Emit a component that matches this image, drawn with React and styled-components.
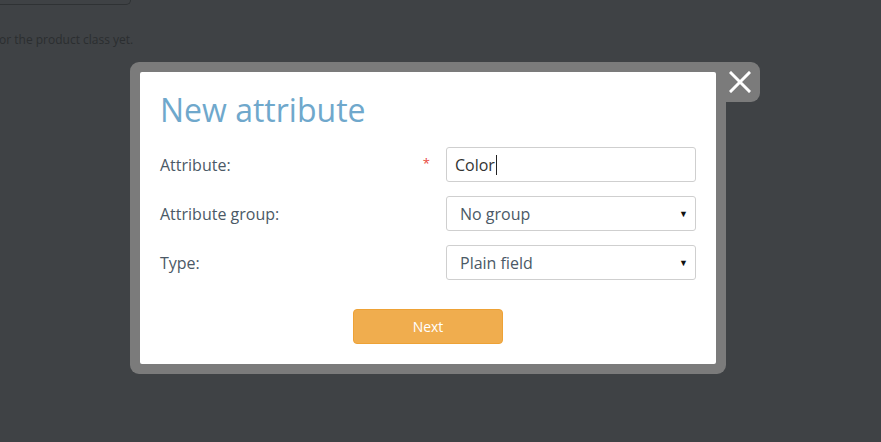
import React from 'react';
import styled, { createGlobalStyle } from 'styled-components';

const GlobalStyle = createGlobalStyle`
    html, body {
        margin: 0;
        padding: 0;
        background: #3f4245;
        font-family: "Open Sans", "Liberation Sans", sans-serif;
    }
`;

function CloseIcon() {
    return (
        <svg width="22" height="22" viewBox="0 0 22 22">
            <path d="M2 2 L20 20 M20 2 L2 20" stroke="#fff" strokeWidth="3" strokeLinecap="square" />
        </svg>
    );
}

function Field({ label, required, children }) {
    return (
        <Row>
            <Label>
                {label}
                {required && <Star>*</Star>}
            </Label>
            {children}
        </Row>
    );
}

function App() {
    return (
        <Page>
            <GlobalStyle />
            <Backdrop>
                <TopBox />
                <Note>or the product class yet.</Note>
            </Backdrop>
            <Frame>
                <CloseTab aria-label="Close">
                    <CloseIcon />
                </CloseTab>
                <Dialog>
                    <Title>New attribute</Title>
                    <Form>
                        <Field label="Attribute:" required>
                            <TextBox>
                                Color<Caret />
                            </TextBox>
                        </Field>
                        <Field label="Attribute group:">
                            <Select>
                                <span>No group</span>
                                <Arrow>▼</Arrow>
                            </Select>
                        </Field>
                        <Field label="Type:">
                            <Select>
                                <span>Plain field</span>
                                <Arrow>▼</Arrow>
                            </Select>
                        </Field>
                    </Form>
                    <Actions>
                        <Button>Next</Button>
                    </Actions>
                </Dialog>
            </Frame>
        </Page>
    );
}

const Page = styled.div`
    position: relative;
    width: 881px;
    height: 442px;
    overflow: hidden;
`;

const Backdrop = styled.div`
    display: flex;
    flex-direction: column;
`;

const TopBox = styled.div`
    width: 130px;
    height: 4px;
    border-right: 1px solid #2f3234;
    border-bottom: 1px solid #2f3234;
    border-bottom-right-radius: 5px;
`;

const Note = styled.p`
    margin: 26px 0 0 -1px;
    font-size: 12px;
    color: #2b2e30;
`;

const Frame = styled.div`
    position: absolute;
    left: 130px;
    top: 62px;
    width: 576px;
    padding: 10px;
    background: #7b7b7b;
    border-radius: 9px 0 9px 9px;
`;

const CloseTab = styled.button`
    position: absolute;
    top: 0;
    right: -34px;
    width: 34px;
    height: 40px;
    padding: 0 6px 0 0;
    border: none;
    background: #7b7b7b;
    border-radius: 0 9px 9px 0;
    display: flex;
    align-items: center;
    justify-content: center;
    cursor: pointer;
`;

const Dialog = styled.div`
    background: #fff;
    border-radius: 2px;
    padding: 18px 20px 20px 20px;
`;

const Title = styled.h1`
    margin: 0 0 17px 0;
    font-size: 32px;
    font-weight: 400;
    color: #6fa8cc;
    line-height: 40px;
`;

const Form = styled.div`
    display: flex;
    flex-direction: column;
    gap: 14px;
`;

const Row = styled.div`
    display: grid;
    grid-template-columns: 1fr 250px;
    align-items: center;
`;

const Label = styled.label`
    display: flex;
    justify-content: space-between;
    padding-right: 16px;
    font-size: 16px;
    color: #4b5966;
`;

const Star = styled.span`
    color: #e8463c;
    font-size: 13px;
`;

const TextBox = styled.div`
    box-sizing: border-box;
    height: 35px;
    display: flex;
    align-items: center;
    padding: 0 8px;
    border: 1px solid #cfcfcf;
    border-radius: 3px;
    font-size: 16px;
    color: #333;
`;

const Caret = styled.span`
    display: inline-block;
    width: 1px;
    height: 20px;
    margin-left: 1px;
    background: #222;
`;

const Select = styled.div`
    box-sizing: border-box;
    height: 35px;
    display: flex;
    align-items: center;
    justify-content: space-between;
    padding: 0 7px 0 13px;
    border: 1px solid #cfcfcf;
    border-radius: 3px;
    font-size: 16px;
    color: #4b5966;
`;

const Arrow = styled.span`
    font-size: 9px;
    color: #111;
`;

const Actions = styled.div`
    display: flex;
    justify-content: center;
    margin-top: 29px;
`;

const Button = styled.button`
    width: 150px;
    height: 35px;
    border: 1px solid #eea236;
    border-radius: 4px;
    background: #f0ad4e;
    color: #fff;
    font-family: inherit;
    font-size: 14px;
`;

export default App;
